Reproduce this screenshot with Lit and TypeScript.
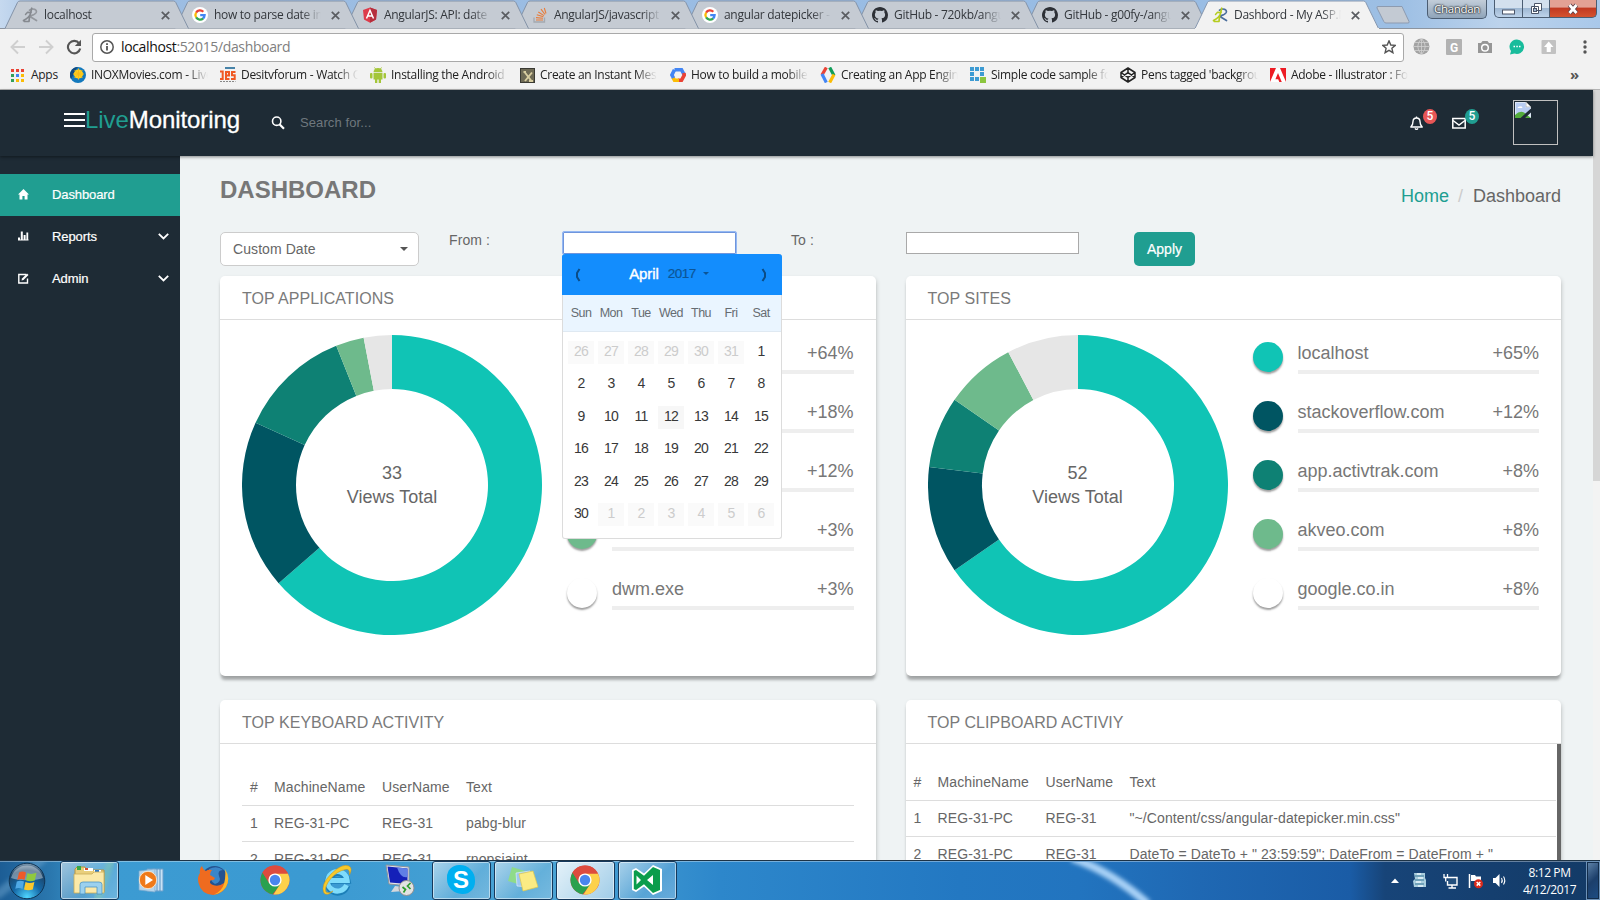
import { LitElement, html, svg, css, nothing } from "lit";
import { customElement, property } from "lit/decorators.js";
import { classMap } from "lit/directives/class-map.js";

const PALETTE = ["#10c4b5", "#005562", "#0e8174", "#6eba8c", "#e6e6e6"];

const icon = (w: number, h: number, body: unknown, vb = `0 0 ${w} ${h}`) =>
  html`<svg width=${w} height=${h} viewBox=${vb} style="display:block;flex:none">${body}</svg>`;

/* ---------- favicons ---------- */
const google = icon(16, 16, svg`<circle cx="8" cy="8" r="8" fill="#fff"/>
  <g fill="none" stroke-width="2.3"><path d="M4.1 5.6A4.6 4.6 0 0 1 11.3 4.8" stroke="#ea4335"/>
  <path d="M4.1 10.4A4.6 4.6 0 0 1 4.1 5.6" stroke="#fbbc05"/><path d="M11.2 11.3A4.6 4.6 0 0 1 4.1 10.4" stroke="#34a853"/>
  <path d="M8.2 8.1H12.6A4.6 4.6 0 0 1 11 11.4" stroke="#4285f4"/></g>`);
const github = icon(16, 16, svg`<path fill="#2d3036" d="M8 0C3.6 0 0 3.6 0 8c0 3.5 2.300 6.500 5.500 7.600.4.100.500-.200.500-.400V13.800c-2.200.500-2.700-1-2.700-1-.400-.900-.900-1.200-.900-1.200-.700-.500.100-.500.100-.500.800.100 1.200.800 1.200.800.700 1.200 1.900.900 2.300.700.100-.500.300-.900.500-1.100-1.800-.200-3.600-.900-3.600-4 0-.900.300-1.600.800-2.100-.100-.200-.400-1 .100-2.100 0 0 .700-.200 2.200.800a7.500 7.500 0 0 1 4 0c1.500-1 2.200-.800 2.200-.800.400 1.100.200 1.900.100 2.100.500.600.800 1.300.800 2.100 0 3.100-1.900 3.700-3.700 3.900.300.300.600.800.600 1.500v2.200c0 .200.100.500.600.400A8 8 0 0 0 16 8c0-4.400-3.600-8-8-8z"/>`);
const runner = (a: string, b: string) => icon(16, 16, svg`<g fill="none" stroke-linecap="round" stroke-linejoin="round">
  <path d="M7.500 3.200 C11 .8 15.500 2.500 14.200 5.500 C13 8 10 8.300 7.500 9.200 L14.500 13.500" stroke=${b} stroke-width="1.700"/>
  <path d="M9.800 1.200 C8.500 5 9 8 6.500 10 C5 11.500 3.500 12.500 1.500 13.500 M7.500 10 L7 14.500 H2.500" stroke=${a} stroke-width="1.700"/>
  <path d="M3.500 7.500 L5.500 5.200 L9 5.500" stroke=${a} stroke-width="1.400"/></g>`);
const angular = icon(16, 16, svg`<path d="M8 0.500 15 3 14 12.500 8 15.700 2 12.500 1 3z" fill="#dd3b4a"/><path d="M8 0.500 15 3 14 12.500 8 15.700z" fill="#b52e3c"/>
  <path d="M4.500 11.500 8 3.300 11.500 11.500M5.700 9H10.300" stroke="#fff" stroke-width="1.500" fill="none"/>`);
const stack = icon(16, 16, svg`<path d="M2 10.500V15H12.500V10.500" fill="none" stroke="#a4a9b0" stroke-width="1.300"/>
  <path d="M4 13H11M4 10.600 11 11.300M4.800 7.800 11.400 9.800M6.300 5 12 8.600M9 2.200 13 7.500M12.300 1 14 6.500" stroke="#e87c3a" stroke-width="1.100"/>`);

const TABS = [
  { label: "localhost", icon: runner("#85898f", "#94989e") },
  { label: "how to parse date in a", icon: google },
  { label: "AngularJS: API: date", icon: angular },
  { label: "AngularJS/javascript c", icon: stack },
  { label: "angular datepicker - G", icon: google },
  { label: "GitHub - 720kb/angular", icon: github },
  { label: "GitHub - g00fy-/angul", icon: github },
  { label: "Dashbord - My ASP.NE", icon: runner("#b5cc1f", "#4a6d9c"), active: true },
];

const hex = (c: string[]) => svg`<g fill="none" stroke-width="3.600"><path d="M4.500 2.700H11.500L14 7.500" stroke=${c[0]}/>
  <path d="M13.900 6 14.300 8 11.500 13.300H8" stroke=${c[1]}/><path d="M9 13.300H4.500L3 10.500" stroke=${c[2]}/><path d="M3.500 11 1.900 8 4.500 2.700" stroke=${c[3]}/></g>`;

const BOOKMARKS = [
  { label: "INOXMovies.com - Live", icon: icon(16, 16, svg`<circle cx="8" cy="8" r="8" fill="#1379bd"/><path d="M8 0a8 8 0 0 0-7 12C4 8 4 4 8 0z" fill="#114a80"/><circle cx="8.500" cy="7" r="4.600" fill="#ffd21c"/><path d="M8.500 1.500V12.500M3 7H14M4.600 3.100 12.400 10.900M12.400 3.100 4.600 10.900" stroke="#f6b81a"/>`) },
  { label: "Desitvforum - Watch On", icon: icon(16, 16, svg`<rect x="5" y="0" width="10" height="2" fill="#4783a8"/><g fill="none" stroke="#f05a24" stroke-width="2"><path d="M0 4.500H2.700V12H0"/><path d="M5.500 8.500H9V5H6V12H9.500"/><path d="M15.500 5H12V8.300H14.700V12H11"/></g><path d="M0 14.500H15.500" stroke="#888" stroke-dasharray="2 1"/>`) },
  { label: "Installing the Android S", icon: icon(16, 16, svg`<g fill="#a4c639"><path d="M3.500 5.200a4.500 4.300 0 0 1 9 0z"/><path d="M3.500 6H12.500V12.500H3.500z"/><rect y="6" width="2.500" height="5.500" rx="1"/><rect x="13.500" y="6" width="2.500" height="5.500" rx="1"/><rect x="5" y="12" width="2.300" height="4"/><rect x="8.700" y="12" width="2.300" height="4"/></g><path d="M4.500.500 6 2.500M11.500.500 10 2.500" stroke="#a4c639"/>`) },
  { label: "Create an Instant Mess", icon: icon(15, 15, svg`<rect x=".5" y=".5" width="14" height="14" fill="#6e6a55" stroke="#3a3a33"/><path d="M4.500 4 11.500 13M12 4.500 5 13M3.500 4H6M9 13H13" stroke="#d8cda0" stroke-width="1.900" fill="none"/>`) },
  { label: "How to build a mobile a", icon: icon(16, 16, hex(["#4285f4", "#ea4335", "#fbbc05", "#4285f4"])) },
  { label: "Creating an App Engine", icon: icon(16, 16, svg`<g fill="none" stroke-width="3.200"><path d="M6.300.500 2 8" stroke="#ea4335"/><path d="M2 7 6.300 15.500" stroke="#4285f4"/><path d="M9.700.500 14 8.500" stroke="#0f9d58"/><path d="M14 7.500 9.700 15.500" stroke="#fbbc05"/></g>`) },
  { label: "Simple code sample for", icon: icon(16, 16, svg`<g fill="#3d9bd3"><path d="M0 0h4v4H0zM5 0h4v4H5zM10 0h4v4h-4zM0 5h4v4H0zM10 5h4v4h-4zM0 10h4v4H0zM5 10h4v4H5z"/></g><path d="M10 10h6v6h-6z" fill="#8cc63f"/>`) },
  { label: "Pens tagged 'backgroun", icon: icon(16, 16, svg`<path d="M8 1 15 5.500V10.500L8 15 1 10.500V5.500zM1 5.500 8 10.300 15 5.500M1 10.500 8 5.700 15 10.500M8 1V5.700M8 10.300V15" fill="none" stroke="#222" stroke-width="1.500" stroke-linejoin="round"/>`) },
  { label: "Adobe - Illustrator : For", icon: icon(16, 16, svg`<rect y="1" width="16" height="14" fill="#fff"/><path d="M0 1H6L0 15zM10 1H16V15zM8 6 11.800 15H9.300L8.200 12.200H5.400z" fill="#ed1c24"/>`) },
];

/* ---------- taskbar icons ---------- */
const chrome = icon(30, 30, svg`<circle cx="15" cy="15" r="14.500" fill="#dd4b3e"/>
  <path d="M15 15 2.440 7.750A14.500 14.500 0 0 0 12.500 29.280L21.500 18.500z" fill="#2aa14f"/>
  <path d="M15 8.500H27.900A14.500 14.500 0 0 1 13.500 29.420L20.700 18.200z" fill="#fdd14a"/>
  <path d="M2.440 7.750A14.500 14.500 0 0 1 27.900 8.500H15L9 18z" fill="#dd4b3e"/>
  <circle cx="15" cy="15" r="6.600" fill="#fff"/><circle cx="15" cy="15" r="5.200" fill="#4a86ee"/>`);

const TASKS = [
  { open: false, cls: "start", icon: icon(38, 38, svg`<defs><radialGradient id="orb" cx=".5" cy=".95" r="1"><stop offset="0" stop-color="#4fd6ff"/><stop offset=".4" stop-color="#1569a8"/><stop offset=".75" stop-color="#1c4468"/><stop offset="1" stop-color="#9db4c6"/></radialGradient></defs>
    <circle cx="19" cy="19" r="17.800" fill="url(#orb)" stroke="#0f3454" stroke-width="1"/><path d="M3 16A16.500 16.500 0 0 1 35 16C27 19 11 19 3 16z" fill="#fff" opacity=".38"/>
    <path d="M11 10.500Q14.500 8.500 18 10.500L16.500 18Q13 16 9.200 18z" fill="#ee5a29"/><path d="M19.500 11Q23 13 28.500 10.800L26.800 18.500Q22 20 18 18.300z" fill="#8fc93f"/>
    <path d="M8.800 19.500Q12.500 17.800 16 19.600L14.500 27Q11 25 7.300 26.800z" fill="#4fa9e6"/><path d="M17.500 20Q21.500 21.800 26.400 20L24.800 27.500Q20 29 16 27.500z" fill="#fbc72c"/>`) },
  { open: true, icon: icon(34, 30, svg`<path d="M3 4 5 2H13L14 5H32V27H3z" fill="#e9cf7c" stroke="#b59545"/><path d="M5 1h4v4H5z" fill="#36a845"/><path d="M12 3H21V6H12zM22 5H29V8H22z" fill="#fff"/><path d="M13 3h3v2h-3z" fill="#d24b2d"/><path d="M23 5h4v2h-4z" fill="#2a77c9"/>
    <path d="M2 9H20L22 7H32V28H2z" fill="#fbe9a8" stroke="#c9ab55" stroke-width=".8"/><path d="M8 29V19.500Q8 17 11 17H27Q30 17 30 19.500V29H25V22H13V29z" fill="#9bd1ee" stroke="#4b95c4" stroke-width=".8"/>`) },
  { icon: icon(28, 26, svg`<path d="M10 2H26V24H10z" fill="#c9e2f5" stroke="#6aa0cb"/><path d="M23 2V24M20 2V24" stroke="#5b93c2"/><path d="M2 4 18 2V25L2 23z" fill="#b5d5ec" stroke="#78a9ce" stroke-width=".7"/><circle cx="11" cy="13" r="8.700" fill="#ef7a1a" stroke="#fff3df" stroke-width=".8"/><path d="M8.300 8 16 13 8.300 18z" fill="#fff"/>`) },
  { icon: icon(32, 32, svg`<circle cx="17.500" cy="15" r="13" fill="#24528f"/><path d="M12 5Q20 1 26 6Q20 6 22 12Q25 18 18 20Q12 17 12 5z" fill="#3a86c9"/><path d="M5 2Q2 5 3 9Q0 13 1.500 19Q4 30 16 31Q28 30 31 18Q30 17 27 19Q22 23 16 21Q11 19 14 16Q17 17 18 14L13 11Q13 8 15 6Q11 5 9 7Q6 6 5 2z" fill="#ef6b1f"/><path d="M28 5Q34 14 29 23Q24 30 17 30.500Q25 27 27 20Q29 13 28 5z" fill="#fbb62c"/>`) },
  { icon: chrome },
  { icon: icon(32, 32, svg`<path d="M26 21.500A9.800 9.800 0 1 1 26.200 16.500H9" fill="none" stroke="#1c7fb8" stroke-width="6.600"/><path d="M25.500 21A9.800 9.800 0 1 1 26.200 16.500H9" fill="none" stroke="#7fdcfb" stroke-width="5"/><path d="M3 29Q-1 21 10 10T28 2Q32 4 28.500 11Q29 4.500 24.500 5.500Q16 7 9.500 15Q3 23 5 28Q8 30 12 27Q6 32.500 3 29z" fill="#f7c92a" stroke="#c8931a" stroke-width=".5"/>`) },
  { icon: icon(32, 32, svg`<path d="M3 1 26 3V22L6 20z" fill="#e3e6ea" stroke="#8d949c"/><path d="M4.500 2.500 24.500 4.500V20L7 18.500z" fill="#1420b8"/><path d="M14 3.500 24.500 4.500V13Q18 15 14 3.500z" fill="#5f7fe6"/><path d="M12 22 20 23 21 27 8 28z" fill="#d4d8dc"/><circle cx="23.500" cy="24" r="7.500" fill="#e2e2e2" stroke="#8f8f8f"/><path d="M19.500 23 22.500 25.500 20.500 28.500M27.500 19 24.500 22 27.500 25" stroke="#2e9c2e" stroke-width="1.700" fill="none"/>`) },
  { open: true, icon: html`<span class="skype">S</span>` },
  { open: true, icon: icon(34, 30, svg`<path d="M6 2 19 6 15 20 2 16z" fill="#8fdb8a"/><path d="M10 8 24 6 24 22 11 21z" fill="#9cc8f2" stroke="#dcecfb" stroke-width=".7"/><path d="M13 9 27 6 32 22 17 26z" fill="#fbeb84" stroke="#e0c84c" stroke-width=".7"/>`) },
  { open: true, lit: true, icon: chrome },
  { open: true, icon: icon(32, 32, svg`<path d="M22 1 31 5V27L22 31 13 22.500 5 28 1 26V6L5 4 13 9.500z" fill="#fff"/><path d="M22 3 29 6V26L22 29 13 20.300 5 26 2.800 25V7L5 6 13 11.700z" fill="#0b9d4c"/><path d="M5.500 11.500V20.500L10 16zM22 11 16 16 22 21z" fill="#fff"/>`) },
];

/* ---------- donut ---------- */
@customElement("usage-donut")
class UsageDonut extends LitElement {
  @property({ attribute: false }) counts: number[] = [];
  static styles = css`
    :host { display: grid; width: 300px; height: 300px; flex: none; }
    svg, .label { grid-area: 1 / 1; }
    .label { align-self: center; text-align: center; font-size: 18px; line-height: 24px; color: #666; }
  `;
  render() {
    const total = this.counts.reduce((a, b) => a + b, 0);
    const pt = (f: number, r: number) => `${150 + r * Math.sin(f * 2 * Math.PI)} ${150 - r * Math.cos(f * 2 * Math.PI)}`;
    let acc = 0;
    const arcs = this.counts.map((c, i) => {
      const a = acc / total;
      acc += c;
      const b = acc / total;
      const big = b - a > 0.5 ? 1 : 0;
      return svg`<path fill=${PALETTE[i]} d="M${pt(a, 150)}A150 150 0 ${big} 1 ${pt(b, 150)}L${pt(b, 96)}A96 96 0 ${big} 0 ${pt(a, 96)}Z"/>`;
    });
    return html`<svg width="300" height="300" viewBox="0 0 300 300">${arcs}</svg>
      <div class="label">${total}<br />Views Total</div>`;
  }
}

/* ---------- date picker ---------- */
@customElement("date-picker")
class DatePicker extends LitElement {
  static styles = css`
    :host { display: block; box-sizing: border-box; width: 220px; height: 285px; background: #fff; border-radius: 3px; border: 1px solid #dcdcdc; border-top: 0; font-family: "Liberation Sans", Arial, sans-serif; }
    .head { display: flex; align-items: center; height: 41px; margin: 0 -1px; padding: 0 14px 0 12px; background: #138dfd; border-radius: 3px 3px 0 0; justify-content: space-between; color: #0c5596; }
    .title { display: flex; align-items: center; margin: -2px 4px 0 0; }
    .month { color: #fff; font-size: 15px; margin-right: 9px; letter-spacing: -.1px; -webkit-text-stroke: .4px #fff; }
    .year { font-size: 13.500px; letter-spacing: -.5px; -webkit-text-stroke: .2px; }
    .caret { border: 3.500px solid transparent; border-top-color: #0c5596; border-bottom: 0; margin-left: 7px; }
    .week { display: grid; grid-template-columns: repeat(7, 30px); height: 36px; line-height: 36px; background: #eaf5ff; border-bottom: 1px solid #dfe9f2; padding: 0 3px; font-size: 12.500px; letter-spacing: -.55px; color: #666c72; text-align: center; }
    .days { display: grid; grid-template-columns: repeat(7, 26px); column-gap: 4px; grid-auto-rows: 23px; row-gap: 9.400px; padding: 9px 0 0 5px; text-align: center; font-size: 14px; line-height: 21px; color: #383838; letter-spacing: -.8px; }
    .off { background: #fafafa; color: #ccc; }
    .today { background: #f7f7f7; }
  `;
  render() {
    const days = [26, 27, 28, 29, 30, 31, ...Array.from({ length: 30 }, (_, i) => i + 1), 1, 2, 3, 4, 5, 6];
    const arrow = (d: string) => icon(7, 14, svg`<path d=${d} fill="none" stroke="#0b4c86" stroke-width="2"/>`);
    return html`
      <div class="head">${arrow("M5.500 1L3 5V9L5.500 13")}
        <div class="title"><span class="month">April</span><span class="year">2017</span><span class="caret"></span></div>
        ${arrow("M1.500 1L4 5V9L1.500 13")}</div>
      <div class="week">${["Sun", "Mon", "Tue", "Wed", "Thu", "Fri", "Sat"].map((d) => html`<span>${d}</span>`)}</div>
      <div class="days">${days.map((d, i) => html`<span class=${classMap({ off: i < 6 || i > 35, today: i === 17 })}>${d}</span>`)}</div>`;
  }
}

@customElement("app-root")
class AppRoot extends LitElement {
  static styles = css`
    :host { display: flex; flex-direction: column; width: 1600px; height: 900px; overflow: hidden; font-family: "Liberation Sans", Arial, sans-serif; font-size: 14px; color: #666; --ui: "Open Sans", "Noto Sans", sans-serif; }
    * { box-sizing: border-box; }

    .strip { height: 29px; flex: none; display: flex; align-items: flex-start; padding-left: 5px; background: linear-gradient(90deg, #c6d9ef 0, #9dbde2 60px, #98bce4 1100px, #9dbfe4 1400px, #bcd3ec 1500px, #a9c8ea 1600px); border-bottom: 1px solid #8c949f; }
    .tab { display: grid; width: 184px; height: 28px; margin-right: -14px; position: relative; flex: none; }
    .tab > svg { grid-area: 1/1; overflow: visible; }
    .tab .inner { grid-area: 1/1; display: flex; align-items: center; padding: 2px 18px 0 17px; }
    .fade { overflow: hidden; white-space: nowrap; -webkit-mask-image: linear-gradient(90deg, #000 82%, transparent); mask-image: linear-gradient(90deg, #000 82%, transparent); }
    .tab .fade { width: 107px; margin: 0 10px 0 6px; font: 12px/18px var(--ui); letter-spacing: -.3px; color: #33373c; }
    .newtab { margin: 6px 0 0 10px; flex: none; }
    .win { display: flex; margin-left: auto; padding-right: 3px; height: 19px; }
    .user { width: 60px; height: 19px; margin-right: 7px; border: 1px solid #4b5d72; border-top: 0; border-radius: 0 0 5px 5px; background: linear-gradient(#c2cdd9, #8fa4b9); color: #fff; font: 11.500px/17px var(--ui); text-align: center; text-shadow: 0 0 2px #000, 0 0 2px #000; letter-spacing: -.3px; }
    .wb { height: 18px; border: 1px solid #4b5d72; border-top: 0; border-left-width: 0; display: grid; place-items: center; background: linear-gradient(#d3e0ee 0 45%, #9fb8d3 50%, #bdd3ea); }
    .wb.min { width: 29px; border-left-width: 1px; border-radius: 0 0 0 5px; }
    .wb.max { width: 27px; }
    .wb.cls { width: 47px; border-radius: 0 0 5px 0; background: linear-gradient(#e3a194 0 40%, #c23a22 50%, #d5532f); }

    .toolbar { display: flex; align-items: center; height: 36px; flex: none; background: #f2f2f2; padding: 0 0 1px 10px; }
    .omni { display: flex; align-items: center; width: 1312px; height: 29px; margin: 1px 9px 0 10px; padding: 0 7px; background: #fff; border: 1px solid #a9a9a9; border-radius: 3px; }
    .url { flex: 1; margin-left: 7px; font: 14px/18px var(--ui); letter-spacing: -.36px; color: #808080; }
    .url b { font-weight: 400; color: #111; }
    .ext { display: flex; align-items: center; gap: 15.500px; }
    .gapfix { width: 0; margin-left: -5px; }
    .marks { display: flex; align-items: center; height: 25px; flex: none; background: #f2f2f2; padding: 0 21px 4px 11px; border-bottom: 1px solid #b4b4b4; font: 12px/18px var(--ui); letter-spacing: -.29px; color: #222; }
    .apps { display: flex; align-items: center; gap: 7px; width: 59px; }
    .mark { display: flex; align-items: center; width: 150px; gap: 5px; }
    .mark .fade { width: 117px; }
    .more { margin-left: auto; font: bold 15px/14px var(--ui); color: #555; padding-bottom: 2px; }

    .page { flex: 1; display: flex; min-height: 0; background: #eff3f4; }
    .site { width: 1593px; display: flex; flex-direction: column; min-height: 0; }
    .vbar { width: 7px; background: linear-gradient(#d6d6d6 391px, #f3f3f3 391px); }
    .top { height: 66px; flex: none; background: #1e2b35; display: flex; align-items: center; padding-left: 64px; box-shadow: 0 1px 3px rgba(0,0,0,.45); position: relative; z-index: 2; }
    .brand { font-size: 24px; color: #fff; -webkit-text-stroke: .3px #fff; width: 186px; margin-top: -7px; letter-spacing: -.08px; }
    .brand i { font-style: normal; color: #209e91; -webkit-text-stroke: 0; }
    .top .hint { color: #6f787e; font-size: 13px; margin: -1px 0 0 15px; letter-spacing: .1px; }
    .burger { margin-top: -6px; }
    .alerts { display: flex; margin-left: auto; align-items: center; padding-right: 35px; }
    .alert { position: relative; margin-right: 29px; }
    .alert + .alert { margin-right: 47px; }
    .badge { position: absolute; left: 13px; top: -7px; width: 14px; height: 15px; border-radius: 50%; background: #e85656; color: #fff; font: 500 12px/15px Roboto, sans-serif; text-align: center; }
    .badge.ok { background: #209e91; left: 13px; top: -7px; }
    .avatar { width: 45px; height: 45px; border: 1px solid #c0c0c0; padding: 1px; margin-top: -1px; }

    .main { flex: 1; display: flex; min-height: 0; }
    .side { width: 180px; flex: none; background: #1e2b35; padding-top: 18px; color: #fff; font-size: 13px; }
    .nav { display: flex; align-items: center; height: 42px; padding: 0 11px 2px 18px; }
    .nav span { flex: 1; margin-left: 23px; letter-spacing: -.1px; -webkit-text-stroke: .2px; }
    .nav.on { background: #209e91; }
    .content { flex: 1; padding: 0 32px 0 40px; min-width: 0; overflow: hidden; }
    .crumbs { display: flex; justify-content: space-between; height: 76px; }
    h1 { margin: 20px 0 0; font: bold 24px/28px "Liberation Sans", Arial, sans-serif; color: #777; }
    .trail { font-size: 18px; margin-top: 29px; line-height: 22px; }
    .trail a { color: #209e91; } .trail s { text-decoration: none; color: #ccc; padding: 0 10px 0 9px; }
    .filters { display: flex; height: 44px; align-items: flex-start; }
    .select { width: 199px; height: 34px; border: 1px solid #ccc; border-radius: 5px; background: #fff; display: flex; align-items: center; justify-content: space-between; padding: 0 10px 0 12px; margin-right: 30px; letter-spacing: .08px; }
    .caret { border: 4px solid transparent; border-top-color: #555; border-bottom: 0; }
    .filters label { line-height: 17px; width: 114px; letter-spacing: .1px; }
    .filters label.until { width: 115px; }
    .field { width: 173px; height: 22px; background: #fff; border: 1px solid #a9a9a9; }
    .pick { position: relative; width: 229px; margin-left: -1px; }
    .pick .field { width: 175px; height: 24px; margin: -1px 0 0 0; border: 1px solid #94b8f3; border-radius: 2px; box-shadow: inset 0 0 0 1px #6f95dc; }
    date-picker { position: absolute; left: 0; top: 22px; z-index: 3; }
    .filters .field.to { margin-right: 55px; }
    .apply { width: 61px; height: 34px; line-height: 34px; border-radius: 5px; background: #209e91; color: #fff; text-align: center; -webkit-text-stroke: .2px; }

    .grid { display: grid; grid-template-columns: 655.500px 655.500px; gap: 24px 30px; grid-template-rows: 400px 400px; }
    .card { background: #fff; border-radius: 5px; box-shadow: 0 5px 3px -1px rgba(0,0,0,.25), 1px 2px 4px rgba(0,0,0,.14); display: flex; flex-direction: column; }
    .card h2 { margin: 0; font-weight: 400; font-size: 16px; height: 44px; line-height: 45px; padding-left: 22px; color: #7a7a7a; border-bottom: 1px solid #ddd; flex: none; letter-spacing: .05px; }
    .usage { display: flex; padding: 15px 22px 0; }
    .legend { margin: 0 0 0 25px; flex: 1; }
    .row { display: flex; height: 59px; padding-top: 7px; gap: 15px; }
    .dot { width: 30px; height: 30px; border-radius: 50%; box-shadow: 0 2px 2px rgba(0,0,0,.38); flex: none; }
    .line { flex: 1; display: flex; justify-content: space-between; height: 32px; border-bottom: 4px solid #eee; font-size: 18px; line-height: 22px; color: #777; }
    table { width: 100%; border-collapse: collapse; line-height: 20px; text-align: left; letter-spacing: .1px; }
    .pad { padding: 25px 22px 0; }
    .flush { padding: 20px 1px 0 0; border-right: 4px solid #666; flex: 1; }
    td, th { font-weight: 400; padding: 7px 8px 8px; border-bottom: 1px solid #ddd; white-space: nowrap; }
    th { padding-top: 8px; }
    th:nth-child(1) { width: 24px; } th:nth-child(2) { width: 108px; } th:nth-child(3) { width: 84px; }

    .task { height: 40px; flex: none; position: relative; z-index: 5; display: flex; border-top: 1px solid #1d3346; box-shadow: inset 0 1px 0 rgba(255,255,255,.35);
      background: linear-gradient(90deg, #1c5d95 0, #2a77ae 50px, #3c9bd2 100px, #3b9ad2 320px, #4aa3d4 560px, #2d87cb 720px, #2378c2 960px, #2274bf 1080px, #1f68b3 1200px, #1a5ca6 1350px, #174478 1385px, #133a66 1600px); }
    .glow { position: absolute; left: 0; top: 1px; }
    .item { width: 59px; margin-right: 3px; display: grid; place-items: center; position: relative; }
    .item.start { width: 54px; margin-right: 6px; }
    .item:not(.start) svg { margin-left: -2px; margin-top: -2px; }
    .item.open { border: 1px solid #15395c; border-radius: 3px; background: linear-gradient(135deg, rgba(255,255,255,.55), rgba(255,255,255,.15) 60%, rgba(255,255,255,.25)); box-shadow: inset 0 0 0 1px rgba(255,255,255,.5); }
    .item.lit { background: linear-gradient(135deg, rgba(255,255,255,.85), rgba(255,255,255,.5)); }
    .skype { width: 28px; height: 29px; margin: -2px 0 0 -1px; border-radius: 12px 15px 12px 15px; background: #00aff0; color: #fff; font: bold 24px/29px "Liberation Sans", sans-serif; text-align: center; }
    .tray { margin-left: auto; display: flex; align-items: center; position: relative; }
    .tray > svg { margin-right: 9.500px; }
    .tray > .arrow { margin-right: 13px; }
    .clock { width: 73px; color: #fff; text-align: center; font: 12px/17px var(--ui); letter-spacing: -.4px; margin-left: -4.500px; }
    .show { width: 14px; height: 39px; border: 1px solid #6d92b8; box-shadow: inset 0 0 0 1px #122c4a; background: linear-gradient(135deg, #6286ab, #1c3f6b 50%, #1d4d84); }
    .sp6 { width: 6.500px; } .sp12 { width: 12px; } .sp4 { width: 3.500px; }
  `;

  private tabs() {
    return TABS.map((t, i) => html`<div class="tab" style="z-index:${t.active ? 20 : 10 - i}">
      <svg width="184" height="28"><path d="M0 28.500 12.500 2.500Q13.200 1 15 1H168.500Q170 1 170.800 2.500L183.500 28.500" fill=${t.active ? "#f2f2f2" : "#c5cbd3"} stroke=${t.active ? "#8798b0" : "#8493a8"}/>${t.active ? svg`<path d="M0 29H184" stroke="#f2f2f2" stroke-width="2"/>` : nothing}</svg>
      <div class="inner">${t.icon}<span class="fade">${t.label}</span>${icon(9, 9, svg`<path d="M.8.800 8.200 8.200M8.200.800.800 8.200" stroke="#5a5d61" stroke-width="1.700"/>`)}</div>
    </div>`);
  }

  private card(title: string, counts: number[], rows: [string, string][]) {
    return html`<section class="card"><h2>${title}</h2><div class="usage"><usage-donut .counts=${counts}></usage-donut>
      <div class="legend">${rows.map(([n, p], i) => html`<div class="row"><span class="dot" style="background:${i < 4 ? PALETTE[i] : "#fff"}"></span>
        <div class="line"><span>${n}</span><span>${p}</span></div></div>`)}</div></div></section>`;
  }

  private table(rows: string[]) {
    return html`<table><tr><th>#</th><th>MachineName</th><th>UserName</th><th>Text</th></tr>
      ${rows.map((t, i) => html`<tr><td>${i + 1}</td><td>REG-31-PC</td><td>REG-31</td><td>${t}</td></tr>`)}</table>`;
  }

  render() {
    const chev = icon(11, 7, svg`<path d="M.8.800 5.500 5.500 10.200.800" fill="none" stroke="#fff" stroke-width="1.800"/>`);
    return html`
      <div class="strip">${this.tabs()}
        <svg class="newtab" width="36" height="18" viewBox="0 0 36 18"><path d="M3 .5H27L34 15.500Q34.500 17 33 17H11Q9.500 17 8.800 15.500L2 2Q1.500.500 3 .5z" fill="#c3cad3" stroke="#8d9bb0"/></svg>
        <div class="win"><div class="user">Chandan</div>
          <div class="wb min">${icon(13, 16, svg`<rect x=".5" y="9" width="12" height="4" fill="#fff" stroke="#4b5568"/>`)}</div>
          <div class="wb max">${icon(13, 13, svg`<path d="M4.500 1.500h7v7h-7zM1.500 4.500h7v7h-7z" fill="#fff" stroke="#4b5568"/><rect x="3.500" y="6.500" width="3" height="3" fill="#9fb8d3" stroke="#4b5568"/>`)}</div>
          <div class="wb cls">${icon(12, 12, svg`<path d="M2.500 2 9.500 10M9.500 2 2.500 10" stroke="#5b4048" stroke-width="4.500"/><path d="M2.500 2 9.500 10M9.500 2 2.500 10" stroke="#fff" stroke-width="2.800"/>`)}</div></div>
      </div>
      <div class="toolbar">
        ${icon(16, 16, svg`<path d="M15 8H2M8 1.500 1.500 8 8 14.500" fill="none" stroke="#cfcfcf" stroke-width="1.900"/>`)}
        <span class="sp12"></span>
        ${icon(16, 16, svg`<path d="M1 8H14M8 1.500 14.500 8 8 14.500" fill="none" stroke="#cfcfcf" stroke-width="1.900"/>`)}
        <span class="sp12"></span>
        ${icon(16, 16, svg`<path d="M13.200 4.500A6.200 6.200 0 1 0 14.200 9.500" fill="none" stroke="#555" stroke-width="2.100"/><path d="M15 .8V7H8.800z" fill="#555"/>`)}
        <div class="omni">
          ${icon(14, 14, svg`<circle cx="7" cy="7" r="6.200" fill="none" stroke="#555" stroke-width="1.500"/><path d="M7 6V10.500M7 3.300V5" stroke="#555" stroke-width="1.800"/>`)}
          <span class="url"><b>localhost</b>:52015/dashboard</span>
          ${icon(14, 14, svg`<path d="M7 .9 8.800 5 13.200 5.400 9.900 8.300 10.900 12.700 7 10.300 3.100 12.700 4.100 8.300.8 5.400 5.200 5z" fill="none" stroke="#555" stroke-width="1.400"/>`)}
        </div>
        <div class="ext">
          ${icon(17, 17, svg`<circle cx="8.500" cy="8.500" r="8" fill="#a3a3a3"/><path d="M.5 8.500h16M2 4.500H15M2 12.500H15M8.500.500v16M8.500.500Q1 8.500 8.500 16.500M8.500.500Q16 8.500 8.500 16.500" fill="none" stroke="#d2d2d2" stroke-width=".8"/>`)}
          <svg width="16" height="16"><rect width="16" height="16" rx="1" fill="#b2b2b2"/><text x="8" y="12.500" text-anchor="middle" font-family="Roboto" font-weight="700" font-size="12" fill="#fff">G</text></svg>
          ${icon(16, 16, svg`<path d="M1 4H4L5.500 2H10.500L12 4H15V14H1z" fill="#969696"/><circle cx="8" cy="8.800" r="3.300" fill="none" stroke="#fff" stroke-width="1.500"/>`)}
          ${icon(16, 16, svg`<path d="M8 .5a7.200 7.200 0 1 1-2.500 14L1 15.500 2 12A7.200 7.200 0 0 1 8 .5z" fill="#18bc9c"/><path d="M4.500 7.500h1.500M7.300 7.500h1.500M10 7.500h1.500" stroke="#fff" stroke-width="1.500"/>`)}
          <svg width="17" height="16"><rect x="1.500" y="1" width="14.500" height="14" rx="1" fill="#c2c2c2"/><path d="M8.700 2.500 13.500 8H10.800V13H6.700V8H4z" fill="#fff"/></svg>
          <span class="gapfix"></span>
          ${icon(4, 16, svg`<g fill="#555"><circle cx="2" cy="3" r="1.700"/><circle cx="2" cy="8" r="1.700"/><circle cx="2" cy="13" r="1.700"/></g>`)}
        </div>
      </div>
      <div class="marks">
        <div class="apps">${icon(13, 13, svg`${["#ea4335", "#ea4335", "#ea4335", "#34a05a", "#4285f4", "#fbbc05", "#34a05a", "#fbbc05", "#fbbc05"].map((c, i) => svg`<rect x=${(i % 3) * 5} y=${Math.floor(i / 3) * 5} width="3" height="3" fill=${c}/>`)}`)}<span>Apps</span></div>
        ${BOOKMARKS.map((b) => html`<div class="mark">${b.icon}<span class="fade">${b.label}</span></div>`)}
        <span class="more">»</span>
      </div>

      <div class="page"><div class="site">
        <header class="top">
          <span class="burger">${icon(21, 16, svg`<path d="M0 2H21M0 8H21M0 14H21" stroke="#fff" stroke-width="2"/>`)}</span>
          <span class="brand"><i>Live</i>Monitoring</span>
          ${icon(14, 14, svg`<circle cx="5.700" cy="5.200" r="4.200" fill="none" stroke="#fff" stroke-width="1.600"/><path d="M8.500 8.200 13 12.700" stroke="#fff" stroke-width="2.200"/>`)}
          <span class="hint">Search for...</span>
          <div class="alerts">
            <div class="alert">${icon(13, 14, svg`<path d="M.8 11Q3 9 3 5.500Q3.200 2 6.500 2T10 5.500Q10 9 12.200 11z" fill="none" stroke="#fff" stroke-width="1.400" stroke-linejoin="round"/><path d="M6.500.500V2M5 12.300Q6.500 14.500 8 12.300" stroke="#fff" stroke-width="1.300" fill="none"/>`)}<span class="badge">5</span></div>
            <div class="alert">${icon(14, 14, svg`<rect x=".8" y="2.500" width="12.400" height="9.500" fill="none" stroke="#fff" stroke-width="1.500"/><path d="M1 4.500 7 9 13 4.500" fill="none" stroke="#fff" stroke-width="1.400"/>`)}<span class="badge ok">5</span></div>
            <div class="avatar">${icon(16, 16, svg`<path d="M0 0H11L16 5V16H0z" fill="#dfe8f7"/><path d="M11 0V5H16z" fill="#fff" stroke="#999" stroke-width=".6"/><path d="M1 1H10.500V5.500H15V9L7 15H1z" fill="#b9cdf3"/><path d="M2.500 6Q3 4 5 4.500Q7 3.500 7.500 6z" fill="#fff"/><path d="M0 16V13Q5 8 9 10.500L16 16z" fill="#53ac3b"/><path d="M5 16.500 16.500 6V10L9.500 16.500z" fill="#1e2b35"/>`)}</div>
          </div>
        </header>
        <div class="main">
          <nav class="side">
            <div class="nav on">${icon(11, 11, svg`<path d="M5.500 0 11 5.500H9.500V10.500H6.600V7H4.400V10.500H1.500V5.500H0z" fill="#fff"/>`)}<span>Dashboard</span></div>
            <div class="nav">${icon(11, 10, svg`<path d="M0 6.500H2V9H0zM2.800.500H4.800V9H2.800zM5.600 4H7.600V9H5.600zM8.400 1.500H10.200V9H8.400z" fill="#fff"/><path d="M0 9H10.500" stroke="#fff"/>`)}<span>Reports</span>${chev}</div>
            <div class="nav">${icon(11, 11, svg`<path d="M8 1.500H.800V10H9.500V5.500" fill="none" stroke="#fff" stroke-width="1.400"/><path d="M3.500 7.500 4 5.500 9 .5 10.500 2 5.500 7z" fill="#fff"/>`)}<span>Admin</span>${chev}</div>
          </nav>
          <div class="content">
            <div class="crumbs"><h1>DASHBOARD</h1><div class="trail"><a>Home</a><s>/</s>Dashboard</div></div>
            <div class="filters">
              <div class="select">Custom Date<span class="caret"></span></div>
              <label>From :</label>
              <div class="pick"><div class="field"></div><date-picker></date-picker></div>
              <label class="until">To :</label>
              <div class="field to"></div>
              <div class="apply">Apply</div>
            </div>
            <div class="grid">
              ${this.card("TOP APPLICATIONS", [21, 6, 4, 1, 1], [["", "+64%"], ["", "+18%"], ["", "+12%"], ["", "+3%"], ["dwm.exe", "+3%"]])}
              ${this.card("TOP SITES", [34, 6, 4, 4, 4], [["localhost", "+65%"], ["stackoverflow.com", "+12%"], ["app.activtrak.com", "+8%"], ["akveo.com", "+8%"], ["google.co.in", "+8%"]])}
              <section class="card"><h2>TOP KEYBOARD ACTIVITY</h2><div class="pad">${this.table(["pabg-blur", "rnopsiaint"])}</div></section>
              <section class="card"><h2>TOP CLIPBOARD ACTIVIY</h2><div class="flush">${this.table(['"~/Content/css/angular-datepicker.min.css"', 'DateTo = DateTo + " 23:59:59"; DateFrom = DateFrom + "'])}</div></section>
            </div>
          </div>
        </div>
      </div><div class="vbar"></div></div>

      <div class="task">
        <svg class="glow" width="1600" height="38"><defs><filter id="soft"><feGaussianBlur stdDeviation="2"/></filter></defs>
          <path d="M1072 -4Q1112 10 1148 42" fill="none" stroke="#a9d2f7" stroke-width="8" filter="url(#soft)"/>
          <path d="M112 -4 96 42" stroke="#6fc29a" stroke-width="7" opacity=".5" filter="url(#soft)"/>
          <path d="M-4 34 44 -4" stroke="#7fb4da" stroke-width="9" opacity=".4" filter="url(#soft)"/></svg>
        ${TASKS.map((t: any) => html`<div class=${classMap({ item: true, start: !!t.cls, open: !!t.open, lit: !!t.lit })}>${t.icon}</div>`)}
        <div class="tray">
          <svg class="arrow" width="8" height="5"><path d="M0 5 4 .5 8 5z" fill="#fff"/></svg>
          ${icon(15, 17, svg`<path d="M2 1H13V6L14 8V15H2L1 9 3 7z" fill="#a9cddd"/><path d="M3 4H12M3 8H12M3 12H12" stroke="#5c93ad" stroke-width="1.500"/><path d="M5 2H9M6 6H11M4 10H9M6 14H11" stroke="#e6f4fa" stroke-width="1.500"/>`)}
          <span class="sp6"></span>
          ${icon(15, 16, svg`<path d="M5 4.500H14V12H4.500V8M9 12V15M5.500 15H13" fill="#234f7c" stroke="#fff" stroke-width="1.400"/><path d="M1 1V4.500H4.500V1M2.700 4.500V8.500" fill="none" stroke="#fff" stroke-width="1.300"/>`)}
          ${icon(15, 16, svg`<path d="M1.500 1V15" stroke="#fff" stroke-width="1.500"/><path d="M3 2H7L8 3.500H13V9.500H8L7 8H3z" fill="#fff"/><circle cx="10.500" cy="10.800" r="4.500" fill="#dc2a1b"/><path d="M8.700 9 12.300 12.600M12.300 9 8.700 12.600" stroke="#fff" stroke-width="1.500"/>`)}
          ${icon(16, 15, svg`<path d="M1 5H3.500L7.500 1V14L3.500 10H1z" fill="#fff"/><path d="M9.500 5Q11 7.500 9.500 10M11.500 3.500Q14 7.500 11.500 11.500" fill="none" stroke="#fff" stroke-width="1.100"/>`)}
          <div class="clock">8:12 PM<br />4/12/2017</div>
          <div class="show"></div>
        </div>
      </div>`;
  }
}
